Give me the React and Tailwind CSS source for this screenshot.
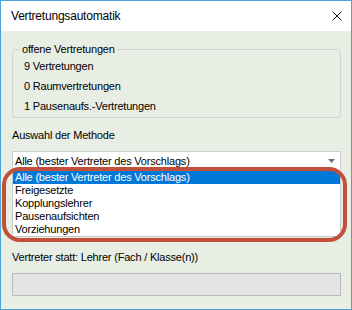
const counts = [
  { n: 9, label: 'Vertretungen' },
  { n: 0, label: 'Raumvertretungen' },
  { n: 1, label: 'Pausenaufs.-Vertretungen' },
];

const methods = [
  'Alle (bester Vertreter des Vorschlags)',
  'Freigesetzte',
  'Kopplungslehrer',
  'Pausenaufsichten',
  'Vorziehungen',
];

export default function App() {
  return (
    <div
      className="w-[352px] h-[310px] flex flex-col border border-[#4ba3d6] bg-[#e8eee4] text-black text-[11px] tracking-[-0.2px]"
      style={{ fontFamily: '"Liberation Sans", Arial, sans-serif' }}
    >
      {/* Title bar */}
      <div className="h-[30px] flex-shrink-0 flex items-center justify-between bg-white pl-[10px] pr-[9px] pb-px">
        <span className="text-[12px]">Vertretungsautomatik</span>
        <svg width="10" height="10" viewBox="0 0 10 10">
          <path d="M0.5 0.5 L9.5 9.5 M9.5 0.5 L0.5 9.5" stroke="#111" strokeWidth="1" />
        </svg>
      </div>

      <div className="flex-1 flex flex-col pl-[11px] pr-[10px] pt-[12px]">
        {/* Group box */}
        <fieldset className="border border-[#d3d3d3] rounded-[3px] pb-px">
          <legend className="ml-[7px] px-[2px] leading-[13px]">offene Vertretungen</legend>
          {counts.map((c) => (
            <div key={c.label} className="h-5 leading-5 pl-[11px]">
              {c.n} {c.label}
            </div>
          ))}
        </fieldset>

        <div className="mt-[11px] leading-[13px]">Auswahl der Methode</div>

        {/* Combo box with open list */}
        <div className="relative mt-[9px]">
          <div className="h-[20px] flex items-center justify-between bg-white border border-[#cccccc] pl-[2px] pr-[5px]">
            <span>Alle (bester Vertreter des Vorschlags)</span>
            <svg width="7" height="4" viewBox="0 0 7 4">
              <path d="M0 0 L7 0 L3.5 4 Z" fill="#6f6f6f" />
            </svg>
          </div>
          <div className="bg-white border-x border-b border-[#c8c8c8] -mt-px pt-px">
            {methods.map((m, i) => (
              <div
                key={m}
                className={`h-[13px] leading-[13px] pl-[2px] ${i === 0 ? 'bg-[#0078d7] text-white' : ''}`}
              >
                {m}
              </div>
            ))}
          </div>

          {/* red annotation */}
          <div className="absolute left-[-10px] top-[16px] w-[345px] h-[75px] border-[4px] border-[#c24f3a] rounded-[18px] pointer-events-none" />
        </div>

        <div className="mt-[14px] leading-[13px]">Vertreter statt: Lehrer (Fach / Klasse(n))</div>

        <div className="mt-[9px] h-[23px] bg-[#e4e4e4] border border-[#b9b9b9]" />
      </div>
    </div>
  );
}
